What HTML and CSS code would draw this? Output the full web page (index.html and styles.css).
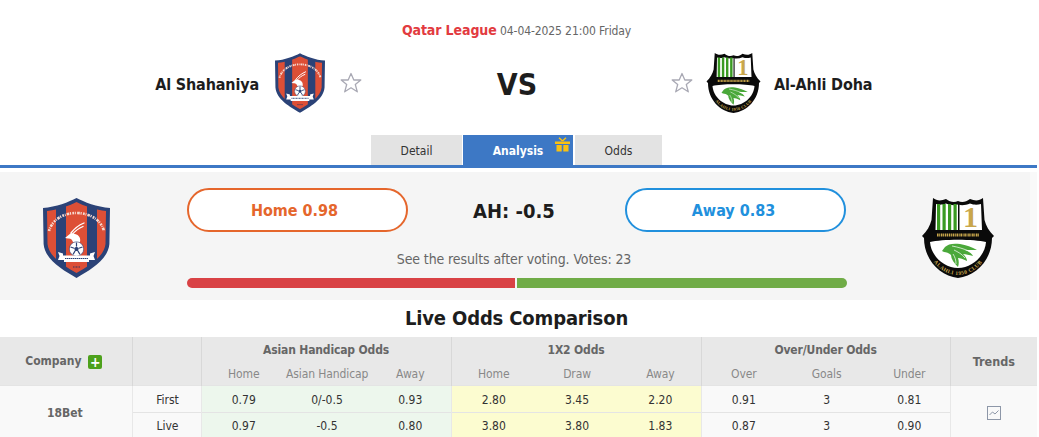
FILE: index.html
```html
<!DOCTYPE html>
<html lang="en">
<head>
<meta charset="utf-8">
<title>Al Shahaniya vs Al-Ahli Doha</title>
<link rel="stylesheet" href="styles.css">
</head>
<body>
<svg class="defs" width="0" height="0" aria-hidden="true">
  <defs>
    <clipPath id="shieldInner"><path d="M33.5 4C26 8 14 12 4 13L4.500 46C6 59 21 68 33.500 75C46 68 61 59 62.500 46L63 13C53 12 41 8 33.500 4Z"/></clipPath>
    <symbol id="crest-shahaniya" viewBox="0 0 67 80">
      <path fill="#2b4277" d="M33.500 0C26 4 13 9 0 10L.6 46C2 62 20 72 33.500 80C47 72 65 62 66.400 46L67 10C54 9 41 4 33.500 0Z"/>
      <g clip-path="url(#shieldInner)" fill="#dd4f36">
        <rect x="4" y="0" width="9" height="80"/>
        <rect x="23" y="0" width="21" height="80"/>
        <rect x="54" y="0" width="9" height="80"/>
      </g>
      <path fill="none" stroke="#f6d9d0" stroke-width="2.600" stroke-dasharray="1.800 .9 .8 1.100 2.600 .7 1.200 1.300" d="M6 33C9 22 20 15 33.500 15C47 15 58 22 61 33"/>
      <path fill="none" stroke="#fff" stroke-width="1.300" stroke-linecap="round" d="M28 35C31 31 36 27 41 25M29 37C32 33 36 30 40 28.500"/>
      <path fill="#fff" d="M22 40L28 35L32 36C36 37 38 40 37 44L30 44C29 41 27 40 25 40.500Z"/>
      <circle cx="33.500" cy="51" r="7.200" fill="#fff" stroke="#2b4277" stroke-width=".6"/>
      <path fill="#2b4277" d="M33.500 48.500L35.800 50.200L34.900 52.900H32.100L31.200 50.200Z"/>
      <path stroke="#2b4277" stroke-width="1.200" d="M33.500 48.500V44.500M35.800 50.200L39.500 49M34.900 52.900L37 56.500M32.100 52.900L30 56.500M31.200 50.200L27.500 49"/>
      <path fill="#fff" d="M15 54L20 55.500V57.500H47V55.500L52 54L50.500 58L52 62H46V64H21V62H15L16.500 58Z"/>
      <path stroke="#2b4277" stroke-width="1.200" stroke-dasharray="1.500 .5" d="M22 60.500H45"/>
      <path stroke="#33355f" stroke-width="1.200" stroke-dasharray="1 .5" d="M30 69H37"/>
    </symbol>
    <symbol id="crest-ahli" viewBox="0 0 72 80">
      <path fill="#0a0a0a" d="M11 0C15 3 19 3 24 1C28 4 32 5 36 3C40 5 44 4 48 1C53 3 57 3 61 0L62.500 22C64 28 67 33 72 38L70 40C70 62 54 78 36 80C18 78 2 62 2 40L0 38C5 33 8 28 9.500 22Z"/>
      <path fill="#fff" d="M14 6C17 7 20 7 24 5.500C28 7 32 8 36 6.500C40 8 44 7 48 5.500C52 7 55 7 59 6L60 32H13.500Z"/>
      <g fill="#3a9a22">
        <rect x="15" y="6" width="3.200" height="26"/>
        <rect x="20.500" y="6" width="3.200" height="26"/>
        <rect x="26" y="6" width="3.200" height="26"/>
        <rect x="31.500" y="6" width="3.200" height="26"/>
      </g>
      <rect x="36" y="6" width="1.500" height="26" fill="#0a0a0a"/>
      <text class="crest-one" x="48.500" y="29" text-anchor="middle">1</text>
      <path stroke="#c9a74c" stroke-width="3" stroke-dasharray="1.600 .6 1 .7" d="M15 37H57"/>
      <path fill="#fff" d="M8 44C20 41 52 41 64 44C63 58 50 70 36 70C22 70 9 58 8 44Z"/>
      <path fill="#4aa83a" d="M20 53L23 49C26 46 31 45 38 46C44 47 50 49 55 52C50 52 46 52 43 52C48 54 50 56 51 58C47 57 44 56 41 56C44 59 45 61 45 63C41 61 38 60 36 60C37 63 37 66 36 69C32 65 29 61 29 57C27 55 24 54 22 54Z"/>
      <path fill="none" stroke="#fff" stroke-width=".7" d="M30 48C36 49 42 51 47 53M32 52C36 54 40 56 43 60M31 56C33 59 34 62 34 66"/>
      <path id="ahliArc" fill="none" d="M5 50C9 66 22 77 36 77C50 77 63 66 67 50"/>
      <text class="crest-arc"><textPath href="#ahliArc" startOffset="50%" text-anchor="middle">ALAHLI 1950 CLUB</textPath></text>
    </symbol>
    <symbol id="icon-star" viewBox="0 0 22 22">
      <path fill="#fff" stroke="#a9a9b4" stroke-width="1.300" stroke-linejoin="round" d="M11 1.500L13.800 8H20.800L15.300 12.500L17.300 19.800L11 15.800L4.700 19.800L6.700 12.500L1.200 8H8.200Z"/>
    </symbol>
  </defs>
</svg>

<header class="match">
  <p class="match-title"><a class="league">Qatar League</a> <span class="kickoff">04-04-2025 21:00 Friday</span></p>
  <div class="teams">
    <div class="team team-home">
      <span class="team-name">Al Shahaniya</span>
      <svg class="crest crest-small-home"><use href="#crest-shahaniya"/></svg>
      <svg class="star"><use href="#icon-star"/></svg>
    </div>
    <div class="versus">VS</div>
    <div class="team team-away">
      <svg class="star"><use href="#icon-star"/></svg>
      <svg class="crest crest-small-away"><use href="#crest-ahli"/></svg>
      <span class="team-name">Al-Ahli Doha</span>
    </div>
  </div>
  <nav class="tabs">
    <a class="tab tab-detail">Detail</a>
    <a class="tab tab-analysis">Analysis
      <svg class="gift" viewBox="0 0 15 15" aria-hidden="true">
        <path fill="#f8c112" d="M0 4.500H15V7H0ZM1.500 8H6.700V14.500H1.500ZM8.300 8H13.500V14.500H8.300Z"/>
        <path fill="none" stroke="#f8c112" stroke-width="1.500" d="M7.500 4L4 .8M7.500 4L11 .8"/>
      </svg>
    </a>
    <a class="tab tab-odds">Odds</a>
  </nav>
</header>

<section class="vote">
  <svg class="crest-large crest-large-home"><use href="#crest-shahaniya"/></svg>
  <div class="vote-main">
    <div class="vote-row">
      <button class="pick pick-home">Home 0.98</button>
      <strong class="handicap">AH: -0.5</strong>
      <button class="pick pick-away">Away 0.83</button>
    </div>
    <p class="vote-note">See the results after voting. Votes: 23</p>
    <div class="vote-bar">
      <span class="bar-home"></span>
      <span class="bar-away"></span>
    </div>
  </div>
  <svg class="crest-large crest-large-away"><use href="#crest-ahli"/></svg>
</section>

<h2 class="section-title">Live Odds Comparison</h2>

<table class="odds">
  <colgroup>
    <col class="c-company"><col class="c-type">
    <col class="c-o"><col class="c-o2"><col class="c-o">
    <col class="c-o"><col class="c-o2"><col class="c-o">
    <col class="c-o"><col class="c-o"><col class="c-o">
    <col class="c-trend">
  </colgroup>
  <thead>
    <tr class="head-top">
      <th rowspan="2" class="th-company">Company <span class="plus">+</span></th>
      <th rowspan="2"></th>
      <th colspan="3">Asian Handicap Odds</th>
      <th colspan="3">1X2 Odds</th>
      <th colspan="3">Over/Under Odds</th>
      <th rowspan="2" class="th-trends">Trends</th>
    </tr>
    <tr class="head-sub">
      <th>Home</th><th>Asian Handicap</th><th>Away</th>
      <th>Home</th><th>Draw</th><th>Away</th>
      <th>Over</th><th>Goals</th><th>Under</th>
    </tr>
  </thead>
  <tbody>
    <tr class="row-first">
      <td rowspan="2" class="company">18Bet</td>
      <td class="type">First</td>
      <td class="green">0.79</td><td class="green">0/-0.5</td><td class="green">0.93</td>
      <td class="yellow">2.80</td><td class="yellow">3.45</td><td class="yellow">2.20</td>
      <td class="plain">0.91</td><td class="plain">3</td><td class="plain">0.81</td>
      <td rowspan="2" class="trend">
        <svg class="trend-icon" viewBox="0 0 14 14" aria-hidden="true">
          <rect x=".5" y=".5" width="13" height="13" fill="none" stroke="#8d97a8"/>
          <path fill="none" stroke="#8d97a8" d="M2.500 9L5.500 6L8 8L11.500 4.500"/>
        </svg>
      </td>
    </tr>
    <tr>
      <td class="type">Live</td>
      <td class="green">0.97</td><td class="green">-0.5</td><td class="green">0.80</td>
      <td class="yellow">3.80</td><td class="yellow">3.80</td><td class="yellow">1.83</td>
      <td class="plain">0.87</td><td class="plain">3</td><td class="plain">0.90</td>
    </tr>
  </tbody>
</table>
</body>
</html>
```
FILE: styles.css
```css
* { box-sizing: border-box; }
html, body { height: 100%; overflow: hidden; }
body {
  margin: 0;
  width: 1037px;
  background: #fff;
  color: #222;
  font-family: "DejaVu Sans", "Liberation Sans", sans-serif;
  font-stretch: condensed;
  font-size: 12px;
}
.defs { position: absolute; }

.match { height: 168px; border-bottom: 3px solid #3d78c5; }
.match-title { margin: 0; padding-top: 21px; height: 54px; width: 1033px; text-align: center; line-height: 18px; }
.league { color: #e23b40; font-weight: bold; font-size: 14px; letter-spacing: -.1px; }
.kickoff { color: #666; font-size: 12px; letter-spacing: -.1px; }

.teams { display: grid; grid-template-columns: 362px 310px 1fr; width: 1035px; height: 60px; align-items: center; }
.team { display: flex; align-items: center; }
.team-home { justify-content: flex-end; }
.team-away { margin-left: -1px; }
.team-name { font-size: 16px; font-weight: bold; color: #1d1d1d; letter-spacing: -.15px; }
.versus { font-size: 30px; font-weight: bold; text-align: center; color: #1d1d1d; }
.crest { display: block; height: 60px; margin-top: -3px; }
.crest-small-home { width: 50px; margin-left: 16px; margin-right: 15px; }
.crest-small-away { width: 55px; margin-left: 13px; margin-right: 13px; }
.star { display: block; width: 22px; height: 22px; margin-top: -2px; }

.tabs { display: flex; justify-content: center; gap: 1px; width: 1033px; margin-top: 21px; }
.tab { display: flex; align-items: center; justify-content: center; height: 30px; padding-top: 1px; position: relative; font-size: 12px; color: #333; background: #e3e3e3; }
.tab-detail { width: 91px; }
.tab-analysis { width: 110px; background: #3d78c5; color: #fff; font-weight: bold; }
.tab-odds { width: 87px; margin-left: 1px; }
.gift { position: absolute; right: 3px; top: 2px; width: 15px; height: 15px; }

.vote { display: flex; align-items: center; height: 128px; margin-top: 4px; background: #f5f5f5; border-right: 7px solid #f9f9f9; }
.crest-large { display: block; height: 80px; flex: none; margin-top: 3px; }
.crest-large-home { width: 67px; margin-left: 43px; margin-right: 77px; }
.crest-large-away { width: 72px; margin-left: 75px; }
.vote-main { width: 660px; padding-top: 3px; }
.vote-row { display: flex; align-items: center; justify-content: space-between; width: 659px; }
.pick { width: 221px; height: 44px; padding: 2px 0 0; border-radius: 22px; background: #fff; border: 2px solid; font: inherit; font-size: 16px; font-weight: bold; }
.pick-home { border-color: #e5662c; color: #e5662c; padding-right: 6px; }
.pick-away { border-color: #2190dd; color: #2190dd; padding-right: 4px; }
.handicap { padding: 2px 5px 0 0; font-size: 20px; font-weight: bold; color: #1d1d1d; }
.vote-note { margin: 18px 0 10px; height: 18px; width: 654px; text-align: center; font-size: 14px; line-height: 18px; color: #666; letter-spacing: -.1px; }
.vote-bar { display: flex; gap: 2px; height: 10px; width: 660px; }
.bar-home { width: 328px; background: #d94245; border-radius: 5px 0 0 5px; }
.bar-away { flex: 1; background: #70ac47; border-radius: 0 5px 5px 0; }

.section-title { margin: 0; height: 37px; padding-top: 6px; text-align: center; width: 1033px; font-size: 20px; line-height: 24px; font-weight: bold; color: #1d1d1d; letter-spacing: -.15px; }

.odds { table-layout: fixed; border-collapse: collapse; width: 1037px; font-size: 12px; text-align: center; }
.c-company { width: 132px; }
.c-type { width: 69px; }
.c-o { width: 83px; }
.c-o2 { width: 84px; }
.odds th { background: #e8e8e8; border-left: 1px solid #d8d8d8; padding: 0; color: #666; font-weight: bold; white-space: nowrap; }
.odds th:first-child { border-left: 0; }
.head-top th { height: 25px; letter-spacing: -.15px; }
.odds .head-sub th { height: 23px; padding: 2px 0 0 2px; font-weight: normal; color: #888; border-left: 0; letter-spacing: -.1px; }
.odds .head-sub th:first-child, .odds .head-sub th:nth-child(4), .odds .head-sub th:nth-child(7) { border-left: 1px solid #d8d8d8; }
.head-top .th-company { padding: 2px 4px 0 0; font-size: 12px; letter-spacing: 0; }
.head-top .th-trends { padding-top: 2px; font-size: 12.500px; letter-spacing: 0; }
.plus { display: inline-flex; align-items: center; justify-content: center; width: 14px; height: 14px; margin-left: 3px; border-radius: 2px; background: #4da11c; color: #fff; font-size: 14px; line-height: 14px; vertical-align: -2px; }
.odds td { height: 27px; padding: 0 0 0 2px; border-top: 1px solid #e4e4e4; border-left: 1px solid #e8e8e8; color: #333; }
.odds .row-first td { padding-top: 2px; }
.odds td.green + .green, .odds td.yellow + .yellow, .odds td.plain + .plain { border-left: 0; }
.odds .company { background: #f9f9f9; padding: 3px 2px 0 0; font-size: 12px; font-weight: bold; color: #666; border-left: 0; }
.type { background: #f9f9f9; }
.green { background: #edf7ed; }
.yellow { background: #fcfcd0; }
.plain { background: #f9f9f9; }
.odds .trend { background: #f9f9f9; padding: 0; }
.trend-icon { display: block; width: 14px; height: 14px; margin: 0 auto; }
.crest-one { font-family: "Liberation Serif", serif; font-size: 30px; font-weight: bold; fill: #c9a74c; }
.crest-arc { font-family: "Liberation Serif", serif; font-size: 5.500px; font-weight: bold; letter-spacing: .4px; fill: #c9a74c; }
```
